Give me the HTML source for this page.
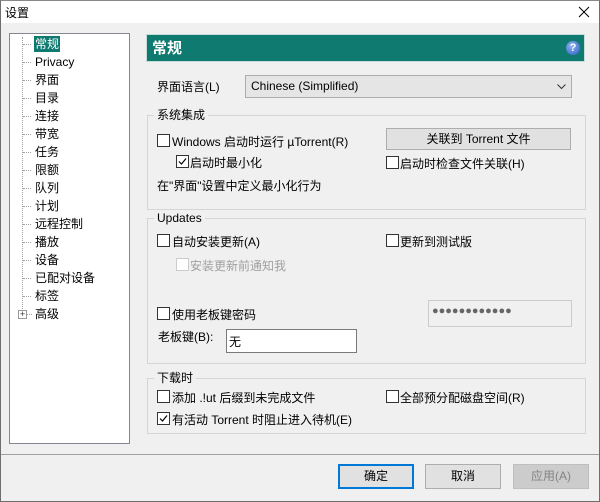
<!DOCTYPE html>
<html><head><meta charset="utf-8"><style>
*{margin:0;padding:0;box-sizing:border-box}
body{width:600px;height:502px;overflow:hidden;background:#f0f0f0;font-family:"Liberation Sans","Noto Sans CJK SC",sans-serif;font-size:12px;color:#000;position:relative}
.a{position:absolute;white-space:nowrap}
.win{position:absolute;left:0;top:0;width:600px;height:502px;border:1px solid #6e6e6e;border-top-color:#888}
.tb{position:absolute;left:1px;top:1px;width:598px;height:22px;background:#fff}
.tree{position:absolute;left:9px;top:33px;width:121px;height:411px;background:#fff;border:1px solid #828790}
.ti{position:absolute;left:24px;line-height:16px;height:16px;padding:0 1px}
.dh{position:absolute;left:13px;width:8px;border-top:1px dotted #a0a0a0}
.grp{position:absolute;border:1px solid #d5d5d5}
.gt{position:absolute;background:#f0f0f0;padding:0 3px;line-height:14px}
.cb{position:absolute;width:13px;height:13px;border:1px solid #333;background:#fff}
.cb.d{border-color:#ccc}
.btn{position:absolute;height:25px;border:1px solid #adadad;background:#e1e1e1;text-align:center;line-height:23px}
</style></head><body>
<div class="win"></div>
<div class="tb"></div>
<div class="a" style="left:5px;top:4px;font-size:12px">设置</div>
<svg class="a" style="left:578px;top:6px" width="12" height="12"><path d="M1 1L11 11M11 1L1 11" stroke="#000" stroke-width="1"/></svg>

<div class="tree">
<div class="a" style="left:12px;top:3px;height:276px;border-left:1px dotted #a0a0a0"></div>
<div class="dh" style="top:10px"></div><div class="ti" style="top:2px;background:#0f7a70;color:#fff">常规</div>
<div class="dh" style="top:28px"></div><div class="ti" style="top:20px">Privacy</div>
<div class="dh" style="top:46px"></div><div class="ti" style="top:38px">界面</div>
<div class="dh" style="top:64px"></div><div class="ti" style="top:56px">目录</div>
<div class="dh" style="top:82px"></div><div class="ti" style="top:74px">连接</div>
<div class="dh" style="top:100px"></div><div class="ti" style="top:92px">带宽</div>
<div class="dh" style="top:118px"></div><div class="ti" style="top:110px">任务</div>
<div class="dh" style="top:136px"></div><div class="ti" style="top:128px">限额</div>
<div class="dh" style="top:154px"></div><div class="ti" style="top:146px">队列</div>
<div class="dh" style="top:172px"></div><div class="ti" style="top:164px">计划</div>
<div class="dh" style="top:190px"></div><div class="ti" style="top:182px">远程控制</div>
<div class="dh" style="top:208px"></div><div class="ti" style="top:200px">播放</div>
<div class="dh" style="top:226px"></div><div class="ti" style="top:218px">设备</div>
<div class="dh" style="top:244px"></div><div class="ti" style="top:236px">已配对设备</div>
<div class="dh" style="top:262px"></div><div class="ti" style="top:254px">标签</div>
<div class="dh" style="top:280px;left:17px;width:5px"></div><div class="ti" style="top:272px">高级</div>
<div class="a" style="left:8px;top:276px;width:9px;height:9px;border:1px solid #999;background:#fff;font-size:9px;line-height:7px;text-align:center;color:#333">+</div>
</div>

<div class="a" style="left:146px;top:34px;width:439px;height:28px;background:#0f7a70;border:1px solid #c6ddd9"></div>
<div class="a" style="left:152px;top:37px;color:#fff;font-weight:bold;font-size:15px">常规</div>
<div class="a" style="left:566px;top:41px;width:14px;height:14px;border-radius:50%;background:radial-gradient(circle at 40% 35%,#8fb4f0,#2a5cc0);color:#fff;font-size:11px;font-weight:bold;text-align:center;line-height:14px">?</div>

<div class="a" style="left:157px;top:78px">界面语言(L)</div>
<div class="a" style="left:245px;top:75px;width:327px;height:23px;background:#e5e5e5;border:1px solid #adadad;padding:3px 5px">Chinese (Simplified)</div>
<svg class="a" style="left:557px;top:84px" width="9" height="6"><path d="M0.5 0.5L4.5 4.5L8.5 0.5" stroke="#333" fill="none"/></svg>

<div class="grp" style="left:147px;top:115px;width:439px;height:95px"></div>
<div class="gt" style="left:154px;top:108px">系统集成</div>
<div class="cb" style="left:157px;top:134px"></div><div class="a" style="left:172px;top:133px">Windows 启动时运行 µTorrent(R)</div>
<div class="btn" style="left:386px;top:128px;width:185px;height:22px;line-height:20px">关联到 Torrent 文件</div>
<div class="cb" style="left:176px;top:155px"></div>
<svg class="a" style="left:177px;top:156px" width="11" height="11"><path d="M2 5.5L4.5 8L9 2.5" stroke="#000" fill="none" stroke-width="1.2"/></svg>
<div class="a" style="left:190px;top:154px">启动时最小化</div>
<div class="cb" style="left:386px;top:156px"></div><div class="a" style="left:400px;top:155px">启动时检查文件关联(H)</div>
<div class="a" style="left:157px;top:177px">在"界面"设置中定义最小化行为</div>

<div class="grp" style="left:147px;top:218px;width:439px;height:146px"></div>
<div class="gt" style="left:154px;top:211px">Updates</div>
<div class="cb" style="left:157px;top:234px"></div><div class="a" style="left:172px;top:233px">自动安装更新(A)</div>
<div class="cb" style="left:386px;top:234px"></div><div class="a" style="left:400px;top:233px">更新到测试版</div>
<div class="cb d" style="left:176px;top:258px"></div><div class="a" style="left:190px;top:257px;color:#a0a0a0">安装更新前通知我</div>
<div class="cb" style="left:157px;top:307px"></div><div class="a" style="left:172px;top:306px">使用老板键密码</div>
<div class="a" style="left:428px;top:300px;width:144px;height:27px;border:1px solid #ccc;padding:4px 3px;color:#666;font-size:11px;font-weight:bold">●●●●●●●●●●●●</div>
<div class="a" style="left:158px;top:328px">老板键(B):</div>
<div class="a" style="left:226px;top:329px;width:131px;height:24px;background:#fff;border:1px solid #7a7a7a;padding:3px 2px">无</div>

<div class="grp" style="left:147px;top:378px;width:439px;height:56px"></div>
<div class="gt" style="left:154px;top:371px">下载时</div>
<div class="cb" style="left:157px;top:390px"></div><div class="a" style="left:172px;top:389px">添加 .!ut 后缀到未完成文件</div>
<div class="cb" style="left:386px;top:390px"></div><div class="a" style="left:400px;top:389px">全部预分配磁盘空间(R)</div>
<div class="cb" style="left:157px;top:412px"></div>
<svg class="a" style="left:158px;top:413px" width="11" height="11"><path d="M2 5.5L4.5 8L9 2.5" stroke="#000" fill="none" stroke-width="1.2"/></svg>
<div class="a" style="left:172px;top:411px">有活动 Torrent 时阻止进入待机(E)</div>

<div class="a" style="left:1px;top:454px;width:598px;border-top:1px solid #a0a0a0"></div>
<div class="btn" style="left:338px;top:464px;width:76px;border:2px solid #0078d7;line-height:21px">确定</div>
<div class="btn" style="left:425px;top:464px;width:76px">取消</div>
<div class="btn" style="left:513px;top:464px;width:76px;background:#ccc;border-color:#bfbfbf;color:#838383">应用(A)</div>
</body></html>
